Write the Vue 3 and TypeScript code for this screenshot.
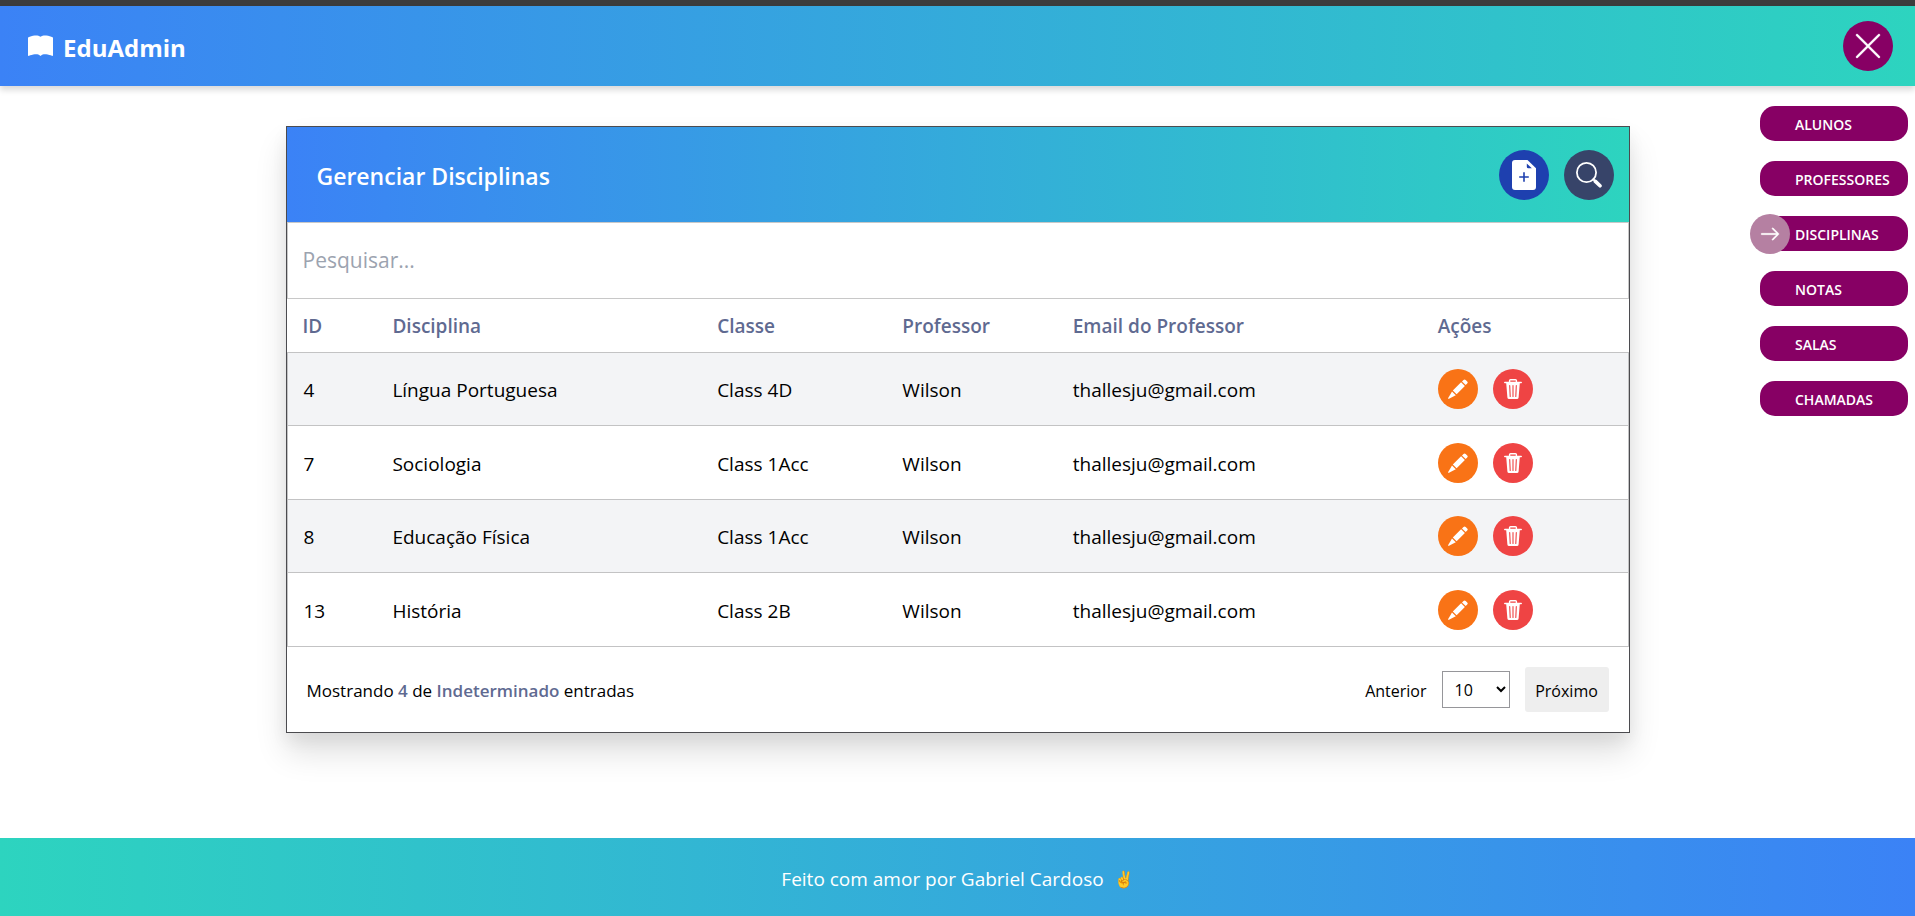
<script setup lang="ts">
import { ref } from 'vue'

interface Subject {
  id: number
  name: string
  room: string
  teacher: string
  email: string
}

const subjects: Subject[] = [
  { id: 4, name: 'Língua Portuguesa', room: 'Class 4D', teacher: 'Wilson', email: 'thallesju@gmail.com' },
  { id: 7, name: 'Sociologia', room: 'Class 1Acc', teacher: 'Wilson', email: 'thallesju@gmail.com' },
  { id: 8, name: 'Educação Física', room: 'Class 1Acc', teacher: 'Wilson', email: 'thallesju@gmail.com' },
  { id: 13, name: 'História', room: 'Class 2B', teacher: 'Wilson', email: 'thallesju@gmail.com' },
]

const links: string[] = ['ALUNOS', 'PROFESSORES', 'DISCIPLINAS', 'NOTAS', 'SALAS', 'CHAMADAS']
const current = 'DISCIPLINAS'
const search = ref('')
const pageSize = ref('10')
</script>

<template>
  <div class="page">
    <header class="topbar">
      <a class="brand" href="#">
        <svg width="25" height="25" viewBox="0 0 16 16" fill="currentColor" aria-hidden="true">
          <path d="M8 1.783C7.015.936 5.587.81 4.287.94c-1.514.153-3.042.672-3.994 1.105A.5.5 0 0 0 0 2.5v11a.5.5 0 0 0 .707.455c.882-.4 2.303-.881 3.68-1.02 1.409-.142 2.59.087 3.223.877a.5.5 0 0 0 .78 0c.633-.79 1.814-1.019 3.222-.877 1.378.139 2.8.62 3.681 1.02A.5.5 0 0 0 16 13.5v-11a.5.5 0 0 0-.293-.455c-.952-.433-2.48-.952-3.994-1.105C10.413.809 8.985.936 8 1.783" />
        </svg>
        <span class="brand-name">EduAdmin</span>
      </a>
      <button class="round close" type="button" aria-label="Fechar menu">
        <svg width="32" height="32" viewBox="0 0 16 16" fill="currentColor" stroke="currentColor" stroke-width="0.2" aria-hidden="true">
          <path d="M2.146 2.854a.5.5 0 1 1 .708-.708L8 7.293l5.146-5.147a.5.5 0 0 1 .708.708L8.707 8l5.147 5.146a.5.5 0 0 1-.708.708L8 8.707l-5.146 5.147a.5.5 0 0 1-.708-.708L7.293 8z" />
        </svg>
      </button>
    </header>

    <nav class="menu" aria-label="Menu">
      <a v-for="link in links" :key="link" class="menu-link" href="#">
        <span v-if="link === current" class="marker">
          <svg width="22" height="22" viewBox="0 0 16 16" fill="currentColor" stroke="currentColor" stroke-width="0.3" aria-hidden="true">
            <path d="M1.5 8a.5.5 0 0 1 .5-.5h10.793L9.646 4.354a.5.5 0 1 1 .708-.708l4 4a.5.5 0 0 1 0 .708l-4 4a.5.5 0 0 1-.708-.708L12.793 8.5H2a.5.5 0 0 1-.5-.5" />
          </svg>
        </span>
        {{ link }}
      </a>
    </nav>

    <main class="content">
      <section class="card">
        <div class="card-head">
          <h1>Gerenciar Disciplinas</h1>
          <div class="head-actions">
            <button class="round add" type="button" aria-label="Adicionar disciplina">
              <svg width="24" height="30" viewBox="0 0 24 30" fill="none" aria-hidden="true">
                <path fill="#ffffff" d="M3 0h12.5L24 8.2V27a3 3 0 0 1-3 3H3a3 3 0 0 1-3-3V3a3 3 0 0 1 3-3z" />
                <path fill="#1e40af" d="M14.8 3.4v3.3a1.6 1.6 0 0 0 1.6 1.6h3.4z" />
                <path stroke="#1e40af" stroke-width="1.6" d="M12 12.2v9.6M7.2 17h9.6" />
              </svg>
            </button>
            <button class="round find" type="button" aria-label="Pesquisar">
              <svg width="26" height="26" viewBox="0 0 26 26" fill="none" stroke="currentColor" stroke-linecap="round" aria-hidden="true">
                <circle cx="10.5" cy="10.5" r="9.6" stroke-width="1.8" />
                <path stroke-width="2" d="M17.3 17.3l2 2" />
                <path stroke-width="3.6" d="M19.4 19.4l4.6 4.4" />
              </svg>
            </button>
          </div>
        </div>

        <input v-model="search" class="search" type="text" placeholder="Pesquisar..." aria-label="Pesquisar" />

        <table>
          <colgroup>
            <col class="c-id" />
            <col class="c-name" />
            <col class="c-room" />
            <col class="c-teacher" />
            <col class="c-email" />
            <col />
          </colgroup>
          <thead>
            <tr>
              <th scope="col">ID</th>
              <th scope="col">Disciplina</th>
              <th scope="col">Classe</th>
              <th scope="col">Professor</th>
              <th scope="col">Email do Professor</th>
              <th scope="col">Ações</th>
            </tr>
          </thead>
          <tbody>
            <tr v-for="s in subjects" :key="s.id">
              <td>{{ s.id }}</td>
              <td>{{ s.name }}</td>
              <td>{{ s.room }}</td>
              <td>{{ s.teacher }}</td>
              <td>{{ s.email }}</td>
              <td>
                <div class="row-actions">
                  <button class="small edit" type="button" :aria-label="'Editar ' + s.name">
                    <svg width="20" height="20" viewBox="0 0 20 20" fill="currentColor" aria-hidden="true">
                      <path d="M14 2.4l1.5-1.5a1.6 1.6 0 0 1 2.2 0l1.5 1.5a1.6 1.6 0 0 1 0 2.2l-1.5 1.5z" />
                      <path d="M13.1 3.3l3.8 3.8-8.3 8.2-3.8-3.8z" />
                      <path d="M4 12.4l3.8 3.8L1 19.8c-.6.3-1.1-.2-.8-.8z" />
                    </svg>
                  </button>
                  <button class="small remove" type="button" :aria-label="'Excluir ' + s.name">
                    <svg width="18" height="20" viewBox="0 0 18 20" fill="none" aria-hidden="true">
                      <path stroke="#ffffff" stroke-width="1.4" d="M5.6 3V1.6a.9.9 0 0 1 .9-.9h5a.9.9 0 0 1 .9.9V3" />
                      <path fill="#ffffff" d="M.8 2.7h16.4a.7.7 0 0 1 0 1.5H.8a.7.7 0 0 1 0-1.5zM2.2 4h13.6l-1.2 14.4a1.7 1.7 0 0 1-1.7 1.6H5.1a1.7 1.7 0 0 1-1.7-1.6z" />
                      <path stroke="#ef4444" stroke-width="1.1" stroke-linecap="round" d="M5.7 6.5l.5 11M9 6.5v11M12.3 6.5l-.5 11" />
                    </svg>
                  </button>
                </div>
              </td>
            </tr>
          </tbody>
        </table>

        <div class="card-foot">
          <p>Mostrando <strong>4</strong> de <strong>Indeterminado</strong> entradas</p>
          <div class="pager">
            <button class="prev" type="button">Anterior</button>
            <select v-model="pageSize" aria-label="Entradas por página">
              <option>10</option>
              <option>20</option>
              <option>50</option>
            </select>
            <button class="next" type="button">Próximo</button>
          </div>
        </div>
      </section>
    </main>

    <footer class="footer">Feito com amor por Gabriel Cardoso <span class="hand">✌️</span></footer>
  </div>
</template>

<style>
body {
  margin: 0;
  background: #ffffff;
}
</style>

<style scoped>
* {
  box-sizing: border-box;
}

.page {
  position: relative;
  display: flex;
  flex-direction: column;
  min-height: 100vh;
  border-top: 6px solid #3c3c3c;
  font-family: 'Segoe UI', 'Open Sans', 'Noto Sans', sans-serif;
  font-size: 19px;
  line-height: 28px;
  color: #000000;
}

button,
input,
select {
  font-family: inherit;
}

button {
  border: 0;
  padding: 0;
  cursor: pointer;
}

.topbar {
  display: flex;
  align-items: center;
  justify-content: space-between;
  height: 80px;
  padding: 0 22px 0 28px;
  background: linear-gradient(to right, #3b82f6, #2dd4bf);
  box-shadow: 0 4px 6px rgba(0, 0, 0, 0.15);
}

.brand {
  display: flex;
  align-items: center;
  gap: 10px;
  color: #ffffff;
  font-size: 24px;
  font-weight: 700;
  text-decoration: none;
}

.brand-name {
  padding-top: 4px;
}

.round {
  display: flex;
  align-items: center;
  justify-content: center;
  width: 50px;
  height: 50px;
  border-radius: 50%;
  color: #ffffff;
}

.close {
  background: #870064;
}

.add {
  background: #1e40af;
}

.find {
  background: #374469;
}

.menu {
  position: absolute;
  top: 100px;
  right: 7px;
  display: flex;
  flex-direction: column;
  gap: 20px;
}

.menu-link {
  position: relative;
  display: flex;
  align-items: center;
  width: 148px;
  height: 35px;
  padding: 2px 0 0 35px;
  border-radius: 15px;
  background: #870064;
  color: #ffffff;
  font-size: 14px;
  font-weight: 600;
  text-decoration: none;
}

.marker {
  position: absolute;
  left: -10px;
  top: -2px;
  display: flex;
  align-items: center;
  justify-content: center;
  width: 40px;
  height: 40px;
  border-radius: 50%;
  background: #b580a2;
}

.content {
  flex: 1;
  padding: 40px 0;
}

.card {
  width: 1344px;
  max-width: 100%;
  margin: 0 auto;
  border: 1px solid #4b4b4f;
  background: #ffffff;
  box-shadow: 0 20px 30px rgba(0, 0, 0, 0.12), 0 8px 16px rgba(0, 0, 0, 0.06);
}

.card-head {
  display: flex;
  align-items: center;
  justify-content: space-between;
  height: 95px;
  padding: 0 15px 0 30px;
  background: linear-gradient(to right, #3b82f6, #2dd4bf);
}

h1 {
  margin: 0;
  padding-top: 2px;
  color: #ffffff;
  font-size: 23px;
  font-weight: 600;
}

.head-actions,
.row-actions {
  display: flex;
  gap: 15px;
}

.search {
  display: block;
  width: 100%;
  height: 77px;
  padding: 0 15px 2px;
  border: 1px solid #c8c8c8;
  border-radius: 0;
  background: #ffffff;
  font-size: 21px;
  outline: none;
}

.search::placeholder {
  color: #9ca3af;
  opacity: 1;
}

table {
  width: 100%;
  table-layout: fixed;
  border-collapse: separate;
  border-spacing: 0;
}

.c-id {
  width: 6.7%;
}

.c-name {
  width: 24.2%;
}

.c-room {
  width: 13.8%;
}

.c-teacher {
  width: 12.7%;
}

.c-email {
  width: 27.2%;
}

th {
  height: 54px;
  padding: 0 16px;
  border-bottom: 1px solid #c3c3c4;
  color: #5f6a91;
  font-weight: 600;
  text-align: left;
}

td {
  height: 73px;
  padding: 2px 16px 0;
  border-bottom: 1px solid #c3c3c4;
}

td:first-child {
  border-left: 1px solid #c3c3c4;
}

td:last-child {
  padding-top: 0;
  border-right: 1px solid #c3c3c4;
}

tbody tr:nth-child(odd) {
  background: #f3f4f6;
}

tbody tr:nth-child(even) td {
  height: 74px;
}

.small {
  display: flex;
  align-items: center;
  justify-content: center;
  width: 40px;
  height: 40px;
  border-radius: 50%;
  color: #ffffff;
}

.edit {
  background: #f97316;
}

.remove {
  background: #ef4444;
}

.card-foot {
  display: flex;
  align-items: center;
  justify-content: space-between;
  height: 85px;
  padding: 0 20px;
  font-size: 17px;
}

p {
  margin: 0;
  padding-top: 2px;
}

strong {
  color: #5f6a91;
  font-weight: 600;
}

.pager {
  display: flex;
  align-items: center;
  gap: 15px;
}

.pager button,
.pager select {
  font-size: 16px;
  color: #000000;
}

.pager .prev {
  padding-top: 2px;
  background: none;
}

.pager select {
  width: 68px;
  height: 37px;
  padding: 0 0 0 8px;
  border: 1px solid #96969a;
  border-radius: 0;
  background: #ffffff;
}

.pager .next {
  width: 84px;
  height: 45px;
  padding-top: 2px;
  border-radius: 3px;
  background: #eeeeee;
}

.footer {
  display: flex;
  align-items: center;
  justify-content: center;
  gap: 10px;
  height: 78px;
  padding-top: 4px;
  background: linear-gradient(to right, #2dd4bf, #3b82f6);
  color: #ffffff;
}

.hand {
  font-size: 16px;
}
</style>
